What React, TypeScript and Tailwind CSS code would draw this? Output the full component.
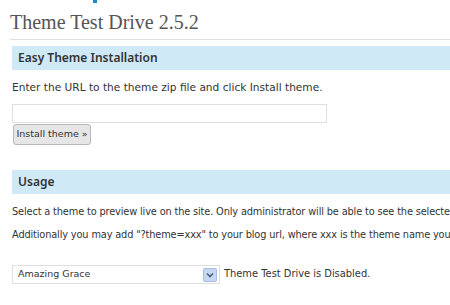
import { FC } from 'react';

const SectionBar: FC<{ title: string }> = ({ title }) => (
  <div className="ml-[12px] h-[24px] bg-[#cfe9f7] pl-[6px] flex items-center font-['Noto_Sans',sans-serif] text-[12px] font-semibold text-[#333]">
    {title}
  </div>
);

const App: FC = () => {
  return (
    <div className="relative w-[450px] h-[305px] overflow-hidden bg-white font-['DejaVu_Sans',sans-serif] text-[#333]">
      <div className="absolute left-[93px] top-0 w-[4px] h-[3px] bg-[#1e8cbe]" />

      <h2 className="pl-[10px] pt-[10px] h-[39px] font-['Liberation_Serif',serif] text-[20px] leading-[24px] text-[#555]">
        Theme Test Drive 2.5.2
      </h2>
      <div className="ml-[10px] h-px bg-[#dfdfdf]" />

      <div className="pt-[6px]">
        <SectionBar title="Easy Theme Installation" />
      </div>

      <p className="pl-[12px] pt-[10px] text-[10.6px] leading-[14px] whitespace-nowrap">
        Enter the URL to the theme zip file and click Install theme.
      </p>

      <div className="pl-[12px] pt-[10px] flex flex-col items-start">
        <input
          type="text"
          className="w-[315px] h-[19px] border border-[#dfdfdf] bg-white outline-none"
        />
        <button
          type="button"
          className="mt-px ml-px w-[78px] h-[21px] rounded-[3px] border border-[#b8b8b8] bg-[#e6e6e6] text-[9.5px] whitespace-nowrap text-[#333] flex items-center justify-center"
        >
          Install theme »
        </button>
      </div>

      <div className="pt-[25px]">
        <SectionBar title="Usage" />
      </div>

      <p className="pl-[12px] pt-[11px] text-[9.8px] tracking-[-0.15px] leading-[14px] whitespace-nowrap">
        Select a theme to preview live on the site. Only administrator will be able to see the selected theme.
      </p>
      <p className="pl-[12px] pt-[9px] text-[9.8px] tracking-[-0.15px] leading-[14px] whitespace-nowrap">
        Additionally you may add "?theme=xxx" to your blog url, where xxx is the theme name you want to preview.
      </p>

      <div className="pl-[12px] pt-[23px] flex items-center gap-[4px]">
        <div className="w-[208px] h-[19px] border border-[#dfdfdf] bg-white flex items-center justify-between pl-[5px] pr-[2px] text-[9.5px]">
          <span>Amazing Grace</span>
          <span className="w-[14px] h-[14px] rounded-[2px] bg-[#c6d7f3] border border-[#a8bde3] flex items-center justify-center">
            <svg width="8" height="6" viewBox="0 0 8 6">
              <path d="M1 1.5 L4 4.5 L7 1.5" fill="none" stroke="#4d6185" strokeWidth="1.6" />
            </svg>
          </span>
        </div>
        <span className="text-[9.9px] whitespace-nowrap">Theme Test Drive is Disabled.</span>
      </div>
    </div>
  );
};

export default App;
